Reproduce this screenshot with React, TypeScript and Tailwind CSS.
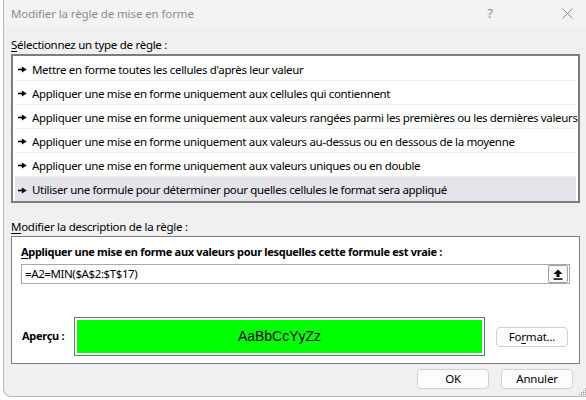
import React from 'react';

const ui = "font-['Noto_Sans',_'Liberation_Sans',_sans-serif]";

const rules = [
  "Mettre en forme toutes les cellules d'après leur valeur",
  'Appliquer une mise en forme uniquement aux cellules qui contiennent',
  'Appliquer une mise en forme uniquement aux valeurs rangées parmi les premières ou les dernières valeurs',
  'Appliquer une mise en forme uniquement aux valeurs au-dessus ou en dessous de la moyenne',
  'Appliquer une mise en forme uniquement aux valeurs uniques ou en double',
  'Utiliser une formule pour déterminer pour quelles cellules le format sera appliqué',
];

const Bullet = () => (
  <svg width="9" height="7" viewBox="0 0 9 7" className="shrink-0">
    <rect x="0" y="2.7" width="4.5" height="1.6" fill="#000" />
    <polygon points="3.8,0.6 8.8,3.5 3.8,6.4" fill="#000" />
  </svg>
);

const UpIcon = () => (
  <svg width="10" height="11" viewBox="0 0 10 11">
    <polygon points="5,0.5 9.5,5 6.5,5 6.5,8 3.5,8 3.5,5 0.5,5" fill="#000" />
    <rect x="0.5" y="9.3" width="9" height="1.5" fill="#000" />
  </svg>
);

const Btn = ({ children }: { children: React.ReactNode }) => (
  <div className="w-[72px] h-[20px] flex items-center justify-center rounded-[4px] border border-[#d1d1d1] bg-[#fdfdfd] text-[11.5px] tracking-[-0.2px] text-black">
    {children}
  </div>
);

export default function App() {
  return (
    <div className={`w-[586px] h-[400px] overflow-hidden bg-white flex pl-[3px] pb-[3px] ${ui}`}>
      <div className="relative w-[590px] shrink-0 h-[397px] bg-[#f0f0f0] border-l border-b border-[#b9b9b9] rounded-bl-[8px] flex flex-col">
        {/* title bar */}
        <div className="h-[27px] flex items-center bg-[#f3f3f3] pl-[7px]">
          <span className="text-[11.5px] tracking-[-0.1px] text-[#8b8b8b]">Modifier la règle de mise en forme</span>
          <span className="ml-auto mr-[69px] text-[13px] text-[#8b8b8b]">?</span>
          <svg width="11" height="11" viewBox="0 0 11 11" className="mr-[20px]">
            <path d="M0.5 0.5L10.5 10.5M10.5 0.5L0.5 10.5" stroke="#8b8b8b" strokeWidth="1" />
          </svg>
        </div>

        <div className="mt-[10px] h-[16px] leading-[16px] pl-[7px] text-[11.5px] tracking-[-0.28px] text-black">
          <span className="underline underline-offset-2">S</span>électionnez un type de règle :
        </div>

        {/* rule list */}
        <div className="mt-[1px] ml-[7px] w-[569px] h-[149px] border-2 border-[#7d7d7d] bg-white px-[2px] pt-[1px]">
          {rules.map((r, i) => (
            <div
              key={i}
              className={`h-[24px] flex items-center gap-[5px] pl-[3px] pt-[2px] text-[11.5px] tracking-[-0.34px] text-black whitespace-nowrap ${
                i === rules.length - 1 ? 'bg-[#e4e4ea]' : 'border-b border-[#ededed]'
              }`}
            >
              <Bullet />
              <span>{r}</span>
            </div>
          ))}
        </div>

        <div className="mt-[16px] h-[16px] leading-[16px] pl-[7px] text-[11.5px] tracking-[-0.28px] text-black">
          <span className="underline underline-offset-2">M</span>odifier la description de la règle :
        </div>

        {/* description panel */}
        <div className="mt-[1px] ml-[7px] w-[569px] h-[128px] border border-[#7d7d7d] bg-white flex flex-col px-[9px]">
          <div className="mt-[7px] h-[16px] leading-[16px] text-[11px] tracking-[-0.3px] font-bold text-black whitespace-nowrap">
            <span className="underline underline-offset-2">A</span>ppliquer une mise en forme aux valeurs pour lesquelles cette formule est vraie :
          </div>
          <div className="mt-[4px] h-[20px] w-[549px] border border-[#a8a8a8] bg-white flex items-center pl-[3px] pr-[1px]">
            <span className="text-[11.5px] tracking-[-0.4px] text-black">=A2=MIN($A$2:$T$17)</span>
            <div className="ml-auto w-[20px] h-[18px] border border-[#a0a0a0] rounded-[2px] bg-[#f9f9f9] flex items-center justify-center">
              <UpIcon />
            </div>
          </div>

          <div className="mt-[33px] flex items-center">
            <span className="w-[53px] pl-[1px] text-[11px] tracking-[-0.3px] font-bold text-black">Aperçu :</span>
            <div className="w-[411px] h-[39px] border border-[#6e6e6e] p-[2px] bg-white">
              <div className="w-full h-full bg-[#00ff00] flex items-center justify-center">
                <span className="font-['Liberation_Sans',_Arial,_sans-serif] text-[14px] text-black">AaBbCcYyZz</span>
              </div>
            </div>
            <div className="ml-[11px]">
              <Btn>
                Fo<span className="underline underline-offset-2">r</span>mat...
              </Btn>
            </div>
          </div>
        </div>

        {/* buttons */}
        <div className="mt-[5px] flex pl-[413px] gap-[12px]">
          <Btn>OK</Btn>
          <Btn>Annuler</Btn>
        </div>

        {/* resize grip */}
        <svg width="9" height="9" viewBox="0 0 9 9" className="absolute left-[574px] top-[387px]">
          {[
            [7, 1], [5, 3], [7, 3], [3, 5], [5, 5], [7, 5], [1, 7], [3, 7], [5, 7], [7, 7],
          ].map(([x, y], i) => (
            <rect key={i} x={x} y={y} width="1.2" height="1.2" fill="#9a9a9a" />
          ))}
        </svg>
      </div>
    </div>
  );
}
